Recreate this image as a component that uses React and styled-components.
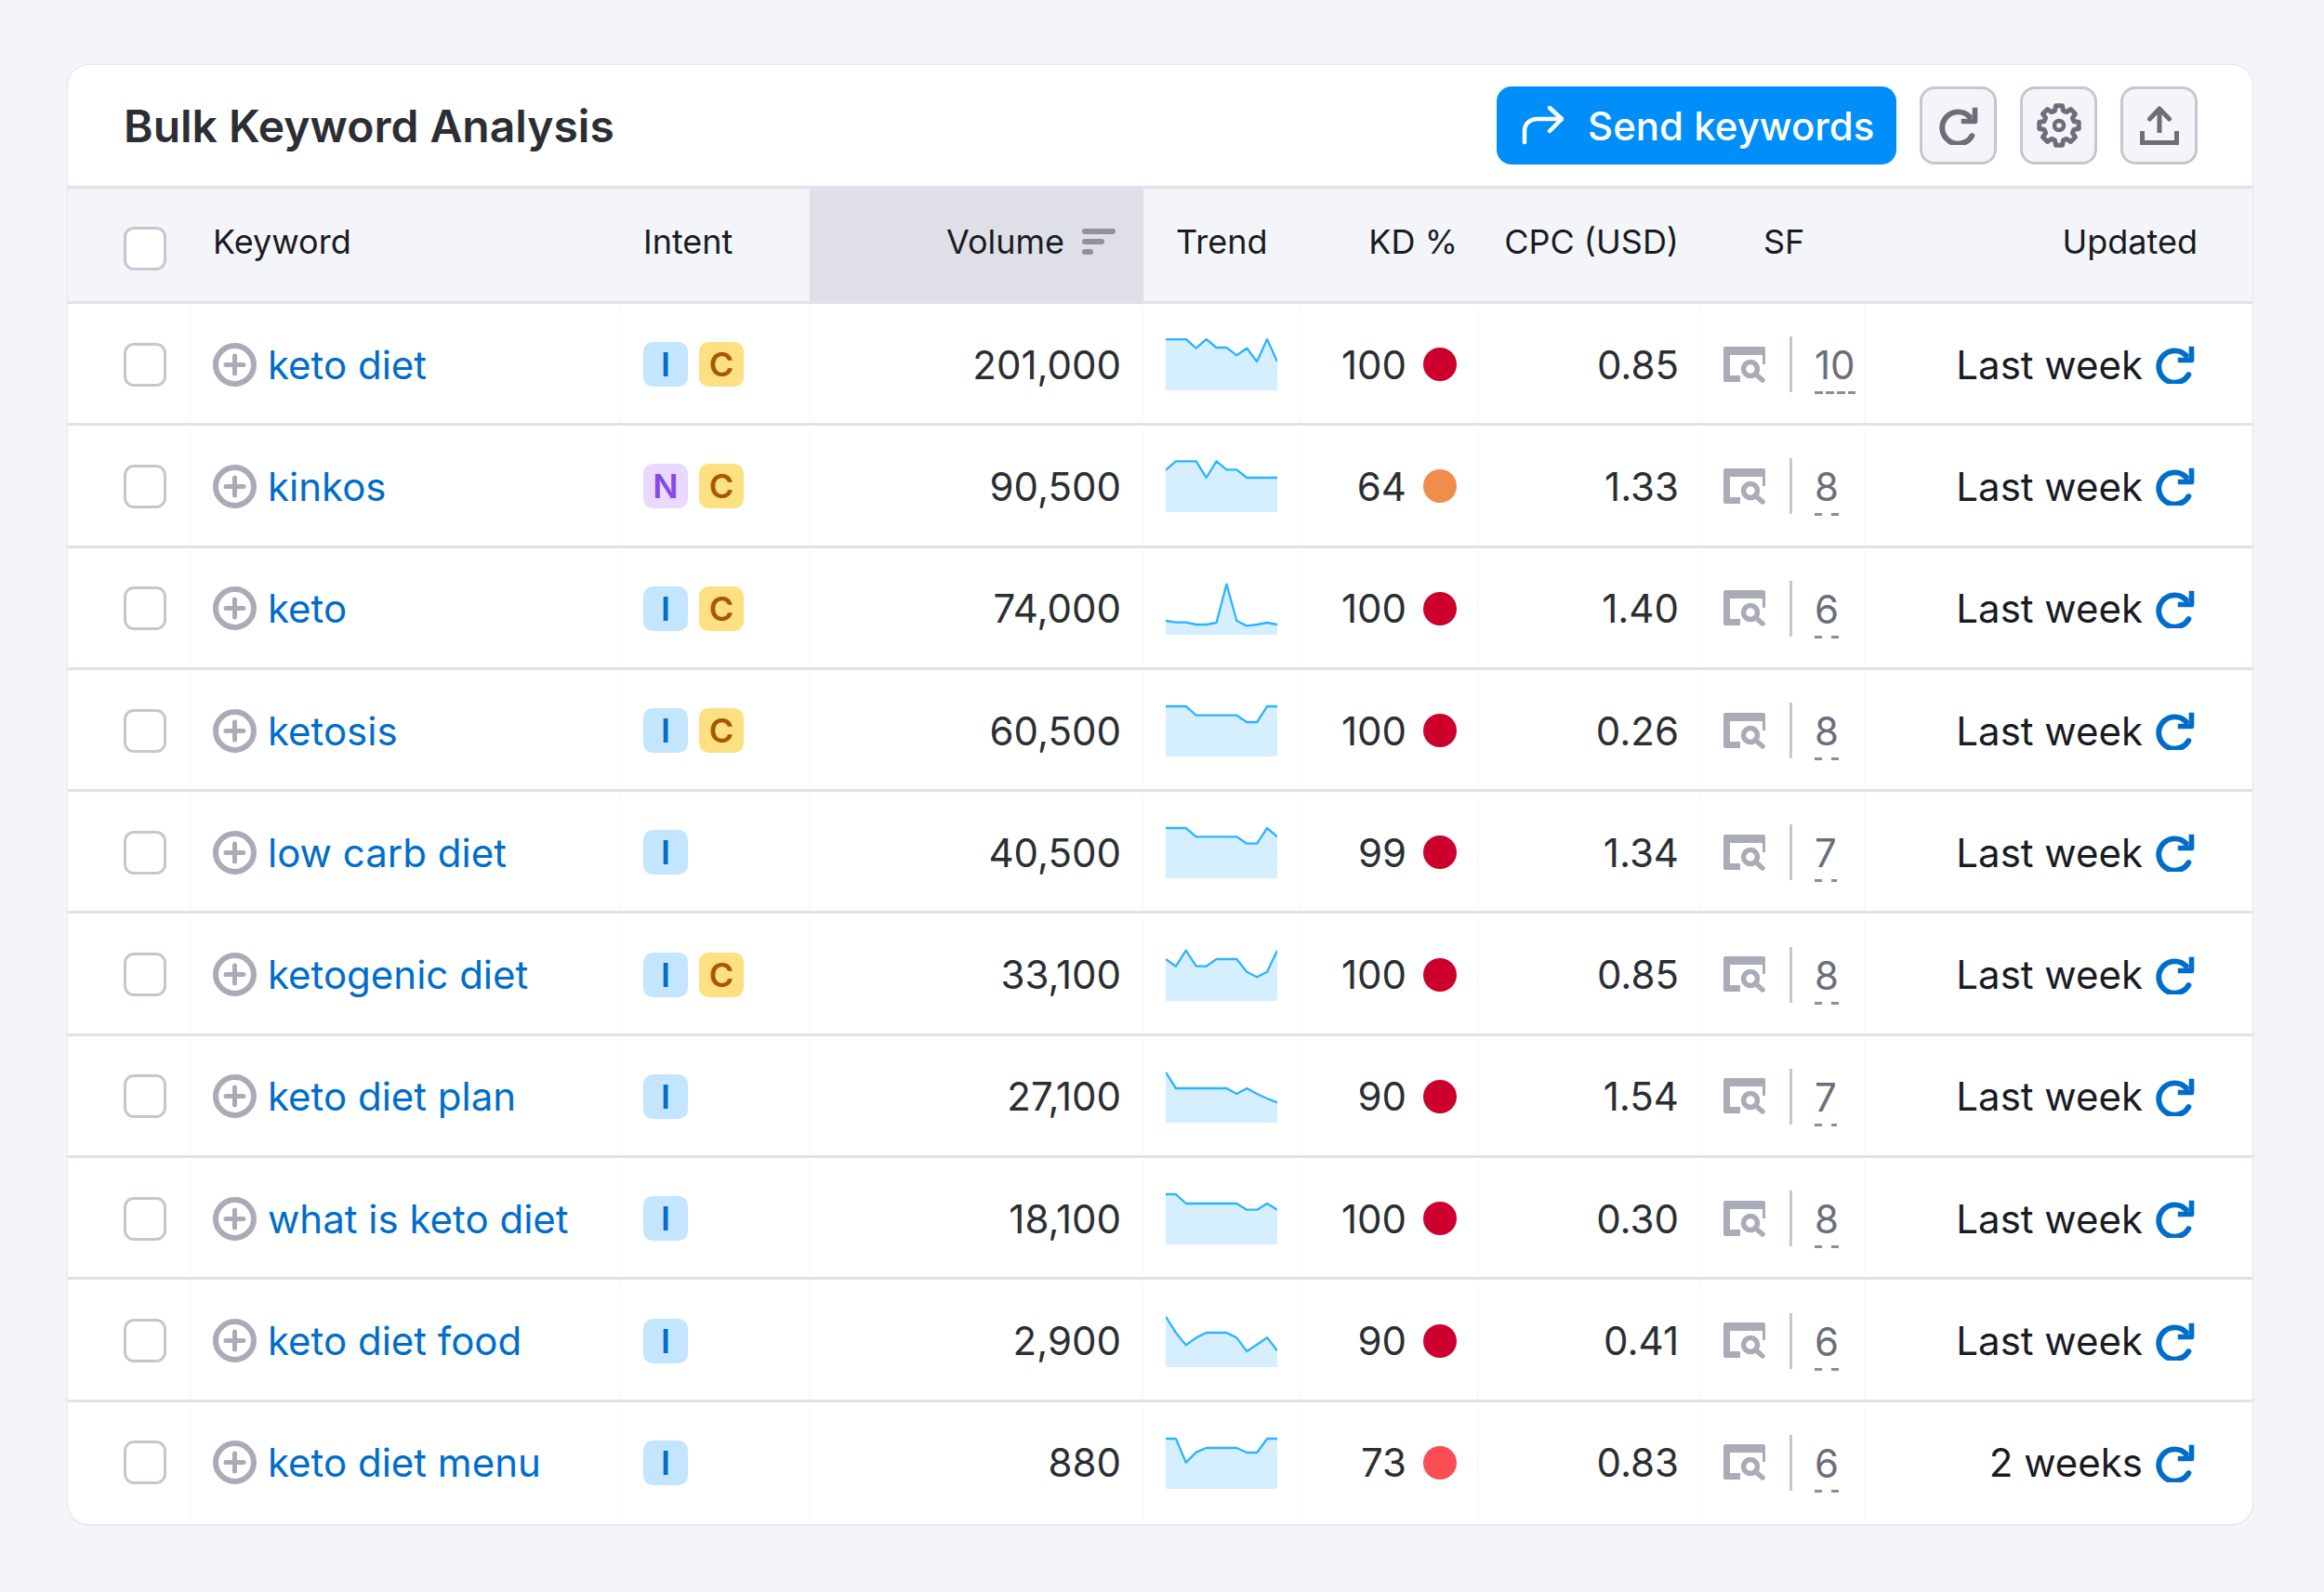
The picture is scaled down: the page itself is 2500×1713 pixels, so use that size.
import React from 'react';
import styled, { createGlobalStyle } from 'styled-components';

const GREY = '#6c6e79';
const BLUE = '#006dca';

const rows = [
  { kw: 'keto diet', intent: ['I', 'C'], vol: '201,000', kd: 100, cpc: '0.85', sf: 10, updated: 'Last week', trend: [3, 3, 3, 32, 3, 30, 30, 55, 32, 75, 3, 75] },
  { kw: 'kinkos', intent: ['N', 'C'], vol: '90,500', kd: 64, cpc: '1.33', sf: 8, updated: 'Last week', trend: [32, 4, 4, 4, 57, 4, 31, 31, 57, 57, 57, 57] },
  { kw: 'keto', intent: ['I', 'C'], vol: '74,000', kd: 100, cpc: '1.40', sf: 6, updated: 'Last week', trend: [123, 128, 128, 135, 135, 129, 5, 123, 139, 135, 129, 135] },
  { kw: 'ketosis', intent: ['I', 'C'], vol: '60,500', kd: 100, cpc: '0.26', sf: 8, updated: 'Last week', trend: [6, 6, 6, 35, 35, 35, 35, 35, 57, 57, 6, 6] },
  { kw: 'low carb diet', intent: ['I'], vol: '40,500', kd: 99, cpc: '1.34', sf: 7, updated: 'Last week', trend: [6, 6, 6, 34, 34, 34, 34, 34, 56, 56, 6, 34] },
  { kw: 'ketogenic diet', intent: ['I', 'C'], vol: '33,100', kd: 100, cpc: '0.85', sf: 8, updated: 'Last week', trend: [33, 56, 5, 56, 56, 33, 33, 33, 74, 91, 74, 5] },
  { kw: 'keto diet plan', intent: ['I'], vol: '27,100', kd: 90, cpc: '1.54', sf: 7, updated: 'Last week', trend: [5, 57, 57, 57, 57, 57, 57, 75, 57, 75, 90, 103] },
  { kw: 'what is keto diet', intent: ['I'], vol: '18,100', kd: 100, cpc: '0.30', sf: 8, updated: 'Last week', trend: [6, 6, 36, 36, 36, 36, 36, 36, 56, 56, 36, 56] },
  { kw: 'keto diet food', intent: ['I'], vol: '2,900', kd: 90, cpc: '0.41', sf: 6, updated: 'Last week', trend: [5, 57, 97, 73, 57, 57, 57, 73, 117, 95, 73, 115] },
  { kw: 'keto diet menu', intent: ['I'], vol: '880', kd: 73, cpc: '0.83', sf: 6, updated: '2 weeks', trend: [6, 6, 83, 50, 36, 36, 36, 36, 51, 51, 6, 6] },
];

const badgeColors = {
  I: { bg: '#c4e5fe', fg: '#006dca' },
  C: { bg: '#fce081', fg: '#a75800' },
  N: { bg: '#ead9fe', fg: '#8649e1' },
};

const kdColor = (kd) => {
  if (kd >= 85) return '#cd002d';
  if (kd >= 70) return '#fa4d56';
  return '#ef8d4d';
};

const GlobalStyle = createGlobalStyle`
  html, body {
    margin: 0;
    background: #f4f5f9;
    font-family: Inter, "Liberation Sans", sans-serif;
  }
`;

const Page = styled.div`
  height: 1713px;
  box-sizing: border-box;
  padding: 69px 76px 0 72px;
`;

const Card = styled.div`
  background: #fff;
  border: 1px solid #e6e7ee;
  border-radius: 24px;
  overflow: hidden;
  box-shadow: 0 1px 2px rgba(0, 0, 0, 0.04);
`;

const Toolbar = styled.div`
  height: 133px;
  box-sizing: border-box;
  display: flex;
  align-items: center;
  padding: 0 59px 0 60px;
  border-bottom: 3px solid #e0e1e9;
`;

const Title = styled.h1`
  margin: 0 auto 0 0;
  font-size: 48px;
  font-weight: 600;
  color: #2b2e33;
`;

const SendButton = styled.button`
  height: 84px;
  width: 430px;
  display: flex;
  align-items: center;
  gap: 26px;
  padding: 0 0 0 27px;
  border: 0;
  border-radius: 16px;
  background: #008ff8;
  color: #fff;
  font: 500 42px Inter, sans-serif;
`;

const IconButton = styled.button`
  width: 83px;
  height: 84px;
  margin-left: 25px;
  padding: 0;
  display: flex;
  align-items: center;
  justify-content: center;
  box-sizing: border-box;
  background: #f4f5f9;
  border: 3px solid #c4c7cf;
  border-radius: 16px;
  color: ${GREY};
`;

const columns = '132px 463px 203px 359px 169px 191px 240px 176px 1fr';

const HeadRow = styled.div`
  display: grid;
  grid-template-columns: ${columns};
  height: 124px;
  box-sizing: border-box;
  background: #f4f5f9;
  border-bottom: 3px solid #e0e1e9;
  font-size: 36px;
  color: #191b23;
`;

const HeadCell = styled.div`
  display: flex;
  align-items: center;
  gap: 19px;
  justify-content: ${(p) => (p.$right ? 'flex-end' : 'flex-start')};
  padding: ${(p) => p.$pad || '0 24px 8px'};
  background: ${(p) => (p.$active ? '#dfe0e7' : 'transparent')};
`;

const Row = styled.div`
  display: grid;
  grid-template-columns: ${columns};
  height: 131.3px;
  box-sizing: border-box;
  padding-top: 2px;
  border-bottom: 3px solid #e0e1e9;
  font-size: 42px;
  color: #2b2e33;
  &:last-child {
    border-bottom-color: transparent;
  }
`;

const Cell = styled.div`
  display: flex;
  align-items: center;
  min-width: 0;
  justify-content: ${(p) => (p.$right ? 'flex-end' : 'flex-start')};
  padding: ${(p) => p.$pad || '0 24px'};
  border-right: 1px solid #f7f7fa;
  &:last-child {
    border-right: 0;
  }
`;

const CheckBox = styled.span`
  display: block;
  width: 46px;
  height: 47px;
  margin-left: -1px;
  box-sizing: border-box;
  background: #fff;
  border: 3px solid #c4c7cf;
  border-radius: 11px;
`;

const KeywordLink = styled.a`
  margin-left: 12px;
  color: ${BLUE};
  white-space: nowrap;
`;

const Badge = styled.span`
  width: 48px;
  height: 48px;
  margin-right: 12px;
  display: flex;
  align-items: center;
  justify-content: center;
  border-radius: 10px;
  font-size: 36px;
  font-weight: 600;
  background: ${(p) => badgeColors[p.$kind].bg};
  color: ${(p) => badgeColors[p.$kind].fg};
`;

const KdDot = styled.span`
  width: 36px;
  height: 36px;
  margin-left: 18px;
  flex: none;
  border-radius: 50%;
  background: ${(p) => p.$color};
`;

const SfDivider = styled.span`
  width: 3px;
  height: 60px;
  margin: 0 24px 0 26px;
  flex: none;
  background: #c4c7cf;
`;

const SfCount = styled.span`
  color: ${GREY};
  line-height: 46px;
  padding: 10px 0 8px;
  background: linear-gradient(to right, #8d8f98 ${(p) => (p.$wide ? 9 : 8)}px, transparent 0) left bottom / ${(p) => (p.$wide ? 12 : 18)}px 3px repeat-x;
`;

const UpdatedText = styled.span`
  color: #191b23;
  margin-right: 14px;
`;

const SerpSvg = styled.svg`
  flex: none;
`;

const PlusIcon = () => (
  <svg width="47" height="47" viewBox="0 0 47 47" fill="none" stroke="#a9acb6">
    <circle cx="23.5" cy="23.5" r="20.5" strokeWidth="6" />
    <path d="M23.5 14v19M14 23.5h19" strokeWidth="5" strokeLinecap="round" />
  </svg>
);

const RefreshIcon = ({ size = 42, color = 'currentColor' }) => (
  <svg width={size} height={size} viewBox="0 0 24 24" fill="none" stroke={color} strokeWidth="3.4">
    <path d="M18.7 6.6A9.8 9.8 0 1 0 20.2 18.3" strokeLinecap="round" />
    <path d="M22 1v8.4h-8.4" strokeLinejoin="round" strokeWidth="3.2" />
  </svg>
);

const SendIcon = () => (
  <svg width="45" height="42" viewBox="0 0 45 42" fill="none" stroke="#fff" strokeWidth="4.5" strokeLinecap="round" strokeLinejoin="round">
    <path d="M3 39V27C3 19 9 14 17 14H43" />
    <path d="M30 2l13 12-13 13" />
  </svg>
);

const GearIcon = () => {
  const teeth = 8;
  const pts = [];
  for (let i = 0; i < teeth; i++) {
    const a = (i / teeth) * Math.PI * 2 - Math.PI / 2;
    const w = Math.PI / teeth;
    [[16.5, -w * 0.7], [21.5, -w * 0.42], [21.5, w * 0.42], [16.5, w * 0.7]].forEach(([r, d]) => {
      pts.push(`${(24 + r * Math.cos(a + d)).toFixed(1)},${(24 + r * Math.sin(a + d)).toFixed(1)}`);
    });
  }
  return (
    <svg width="48" height="48" viewBox="0 0 48 48" fill="none" stroke="currentColor" strokeWidth="5" strokeLinejoin="round">
      <polygon points={pts.join(' ')} />
      <circle cx="24" cy="24" r="5" strokeWidth="4.5" />
    </svg>
  );
};

const UploadIcon = () => (
  <svg width="42" height="42" viewBox="0 0 42 42" fill="none" stroke="currentColor" strokeWidth="5" strokeLinecap="round" strokeLinejoin="round">
    <path d="M21 29V4" strokeLinecap="butt" />
    <path d="M10.5 14L21 3l10.5 11" />
    <path d="M2.5 27v12.5h37V27" strokeLinecap="butt" strokeLinejoin="miter" />
  </svg>
);

const SortIcon = () => (
  <svg width="36" height="30" viewBox="0 0 36 30" fill="#90929b">
    <rect x="0" y="1" width="36" height="6" rx="3" />
    <rect x="0" y="12" width="24" height="6" rx="3" />
    <rect x="0" y="23" width="12" height="6" rx="3" />
  </svg>
);

const SerpIcon = () => (
  <SerpSvg width="45" height="39" viewBox="0 0 45 39" fill="none">
    <path d="M2 0h41a2 2 0 0 1 2 2v17h-3V9H7v22h11v7H2a2 2 0 0 1-2-2V2a2 2 0 0 1 2-2z" fill="#a9acb6" />
    <circle cx="29" cy="24" r="7.5" stroke="#a9acb6" strokeWidth="5.5" />
    <path d="M35 30l7 6" stroke="#a9acb6" strokeWidth="5.5" strokeLinecap="round" />
  </SerpSvg>
);

const Sparkline = ({ points }) => {
  const xs = points.map((_, i) => (i * 366) / (points.length - 1));
  const line = points.map((y, i) => `${xs[i].toFixed(1)},${y}`).join(' ');
  return (
    <svg width="122" height="56" viewBox="0 0 366 168" preserveAspectRatio="none">
      <polygon points={`0,168 ${line} 366,168`} fill="#d6efff" />
      <polyline points={line} fill="none" stroke="#2bb3ff" strokeWidth="7" strokeLinejoin="round" />
    </svg>
  );
};

const App = () => (
  <Page>
    <GlobalStyle />
    <Card>
      <Toolbar>
        <Title>Bulk Keyword Analysis</Title>
        <SendButton>
          <SendIcon />
          Send keywords
        </SendButton>
        <IconButton>
          <RefreshIcon />
        </IconButton>
        <IconButton>
          <GearIcon />
        </IconButton>
        <IconButton>
          <UploadIcon />
        </IconButton>
      </Toolbar>
      <HeadRow>
        <HeadCell $pad="8px 0 0 61px">
          <CheckBox />
        </HeadCell>
        <HeadCell>Keyword</HeadCell>
        <HeadCell>Intent</HeadCell>
        <HeadCell $active $right $pad="0 30px 8px 0">
          Volume
          <SortIcon />
        </HeadCell>
        <HeadCell $pad="0 0 8px 35px">Trend</HeadCell>
        <HeadCell $right $pad="0 22px 8px 0">KD %</HeadCell>
        <HeadCell $right $pad="0 24px 8px 0">CPC (USD)</HeadCell>
        <HeadCell $pad="0 0 8px 67px">SF</HeadCell>
        <HeadCell $right $pad="0 59px 8px 0">Updated</HeadCell>
      </HeadRow>
      {rows.map((row) => (
        <Row key={row.kw}>
          <Cell $pad="0 0 0 61px">
            <CheckBox />
          </Cell>
          <Cell>
            <PlusIcon />
            <KeywordLink>{row.kw}</KeywordLink>
          </Cell>
          <Cell>
            {row.intent.map((i) => (
              <Badge key={i} $kind={i}>{i}</Badge>
            ))}
          </Cell>
          <Cell $right $pad="0 23px 0 0">{row.vol}</Cell>
          <Cell>
            <Sparkline points={row.trend} />
          </Cell>
          <Cell $right $pad="0 22px 0 0">
            {row.kd}
            <KdDot $color={kdColor(row.kd)} />
          </Cell>
          <Cell $right $pad="0 23px 0 0">{row.cpc}</Cell>
          <Cell $pad="0 0 0 24px">
            <SerpIcon />
            <SfDivider />
            <SfCount $wide={row.sf >= 10}>{row.sf}</SfCount>
          </Cell>
          <Cell $right $pad="0 62px 0 0">
            <UpdatedText>{row.updated}</UpdatedText>
            <RefreshIcon color={BLUE} />
          </Cell>
        </Row>
      ))}
    </Card>
  </Page>
);

export default App;
